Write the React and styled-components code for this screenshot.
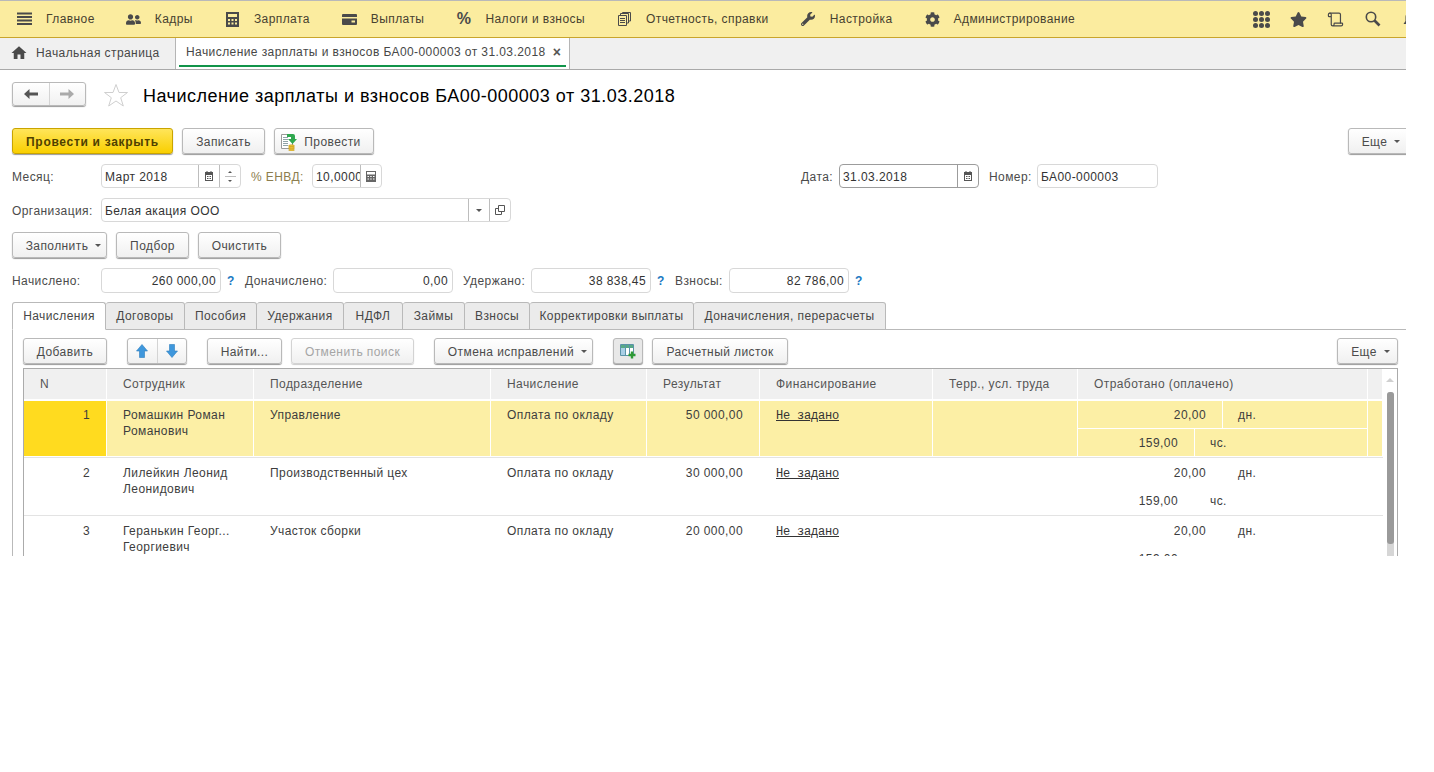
import React from 'react';
import styled, { createGlobalStyle } from 'styled-components';
import { FaWrench, FaCog, FaStar, FaUserFriends } from 'react-icons/fa';
import { MdHome } from 'react-icons/md';
import { Scroll } from 'lucide-react';

const Global = createGlobalStyle`
  html, body { margin: 0; padding: 0; background: #fff; }
  body { font-family: "Liberation Sans", Arial, sans-serif; font-size: 12px; color: #4b4b4b; letter-spacing: .42px; }
  * { box-sizing: border-box; }
`;

const Page = styled.div`
  width: 1406px; height: 556px; overflow: hidden; background: #fff;
  display: flex; flex-direction: column;
`;
const NavBar = styled.div`
  height: 38px; flex: none; display: flex; align-items: center;
  background: #fbec9f; border-top: 1px solid #b9b9b9; border-bottom: 1px solid #c9a52c; padding-left: 2px;
`;
const NavItem = styled.div`
  display: flex; align-items: center; height: 100%; padding: 0 17px 0 15px; color: #474130; white-space: nowrap;
  &:first-child { padding-right: 16px; }
`;
const NavIcon = styled.span`
  width: 15px; margin-right: 14px; height: 16px; display: flex; align-items: center; justify-content: center; color: #4a4a4a; flex: none;
`;
const Percent = styled.span`
  font-size: 16px; font-weight: bold; color: #4a4a4a; letter-spacing: 0;
`;
const NavTools = styled.div`
  margin-left: auto; display: flex; align-items: center; gap: 19px; margin-right: -12.500px; color: #4a4a4a;
`;
const ToolIcon = styled.span`
  width: 18px; height: 18px; display: flex; align-items: center; justify-content: center;
`;
const TabBar = styled.div`
  height: 32px; flex: none; display: flex; background: #f0f0f0; border-bottom: 1px solid #a9a9a9;
`;
const HomeTab = styled.div`
  width: 176px; display: flex; align-items: center; gap: 8px; padding: 0 0 1px 10px; border-right: 1px solid #b5b5b5; color: #474747;
`;
const OpenTab = styled.div`
  width: 394px; background: #fff; border-right: 1px solid #b5b5b5; padding: 0 3px; position: relative;
`;
const OpenTabInner = styled.div`
  height: 29px; display: flex; align-items: center; justify-content: space-between; padding: 0 5px 0 7px;
  border-bottom: 2px solid #11944a; color: #474747;
`;
const CloseMark = styled.span`
  font-size: 14px; font-weight: bold; color: #555; letter-spacing: 0;
`;
const TitleRow = styled.div`
  display: flex; align-items: center; height: 24px; margin: 12px 0 0 12px; flex: none;
`;
const NavGroup = styled.div`
  width: 74px; height: 24px; display: flex; border: 1px solid #b9b9b9; border-radius: 3px;
  background: linear-gradient(#fff, #f1f1f1); box-shadow: 0 1px 1px #999;
`;
const NavArrow = styled.span`
  flex: 1; display: flex; align-items: center; justify-content: center; & + & { border-left: 1px solid #d4d4d4; }
`;
const StarWrap = styled.span`
  margin: 2px 15px 0 18px; display: flex;
`;
const Title = styled.h1`
  margin: 0; padding-top: 4px; font-size: 18px; font-weight: normal; color: #000; letter-spacing: .5px; white-space: nowrap; line-height: 24px;
`;
const Row = styled.div`
  display: flex; align-items: center; flex: none; height: ${p => p.$h}px; margin: ${p => p.$mt}px 0 0 12px;
`;
const Btn = styled.div`
  width: ${p => p.$w}px; height: 26px; flex: none; display: flex; align-items: center; justify-content: center; gap: ${p => p.$gap ?? 0}px;
  border: 1px solid ${p => p.$primary ? '#c9a400' : p.$off ? '#d3d3d3' : '#b9b9b9'}; border-radius: 3px; white-space: nowrap;
  margin-left: ${p => p.$ml ?? 0}px; padding: 1px ${p => p.$pr ?? 0}px 0 ${p => p.$pl ?? 0}px;
  letter-spacing: ${p => p.$primary ? '.7px' : '.42px'};
  background: ${p => p.$primary ? 'linear-gradient(#ffe55a, #f9cf00)' : p.$pressed ? '#e8e8e8' : 'linear-gradient(#fff, #f0f0f0)'};
  box-shadow: ${p => p.$off ? '0 1px 1px #ccc' : '0 1px 1px #999'};
  color: ${p => p.$primary ? '#4f4100' : p.$off ? '#a5a5a5' : '#4b4b4b'}; font-weight: ${p => p.$primary ? 'bold' : 'normal'};
`;
const Caret = styled.span`
  width: 0; height: 0; border: 3px solid transparent; border-top: 3px solid #555; border-bottom: 0; margin-left: 7px; flex: none;
`;
const SelectCaret = styled(Caret)`
  margin-left: 0;
`;
const Label = styled.span`
  width: ${p => p.$w}px; margin-left: ${p => p.$ml ?? 0}px; padding-top: 1px; flex: none; white-space: nowrap; color: ${p => p.$muted ? '#8c7d4e' : '#4b4b4b'};
`;
const Field = styled.div`
  width: ${p => p.$w}px; height: ${p => p.$h ?? 24}px; flex: none; display: flex; align-items: stretch; background: #fff;
  border: 1px solid ${p => p.$focus ? '#9c9c9c' : '#d8d8d8'}; border-radius: 4px;
`;
const FieldText = styled.span`
  flex: 1; min-width: 0; overflow: hidden; white-space: nowrap; line-height: 24px; padding: 0 ${p => p.$right ? 4 : 0}px 0 3px; color: #333;
  text-align: ${p => p.$right ? 'right' : 'left'};
`;
const FieldBtn = styled.span`
  width: ${p => p.$w ?? 21}px; flex: none; display: flex; align-items: center; justify-content: center; border-left: 1px solid ${p => p.$dark ? '#9c9c9c' : '#bdbdbd'}; color: #555;
`;
const SpinBtn = styled(FieldBtn)`
  flex-direction: column; gap: 3px;
`;
const SpinUp = styled.i`
  width: 0; height: 0; border: 2px solid transparent; border-bottom: 2px solid #555; border-top: 0;
`;
const SpinDown = styled.i`
  width: 0; height: 0; border: 2px solid transparent; border-top: 2px solid #555; border-bottom: 0;
`;
const SpinLine = styled.i`
  width: 11px; height: 1px; background: #bdbdbd;
`;
const Help = styled.span`
  width: 24px; padding-left: 6px; color: #1a78c2; font-weight: bold; flex: none; font-size: 12px;
`;
const TabsRow = styled.div`
  display: flex; height: 28px; margin: 9px 0 0 12px; flex: none; position: relative; z-index: 1;
`;
const SheetTab = styled.div`
  width: ${p => p.$w}px; flex: none; display: flex; align-items: center; justify-content: center; white-space: nowrap;
  border: 1px solid #b9b9b9; border-left: ${p => p.$first ? '1px solid #b9b9b9' : 0}; border-radius: 3px 3px 0 0; color: #474747;
  background: ${p => p.$active ? '#fff' : '#ebebeb'}; border-bottom: ${p => p.$active ? '1px solid #fff' : '1px solid #b9b9b9'};
`;
const Panel = styled.div`
  margin: -1px 0 0 12px; padding: 8px 0 0 10px; border-left: 1px solid #b9b9b9; border-top: 1px solid #b9b9b9; flex: 1; min-height: 0; width: 1400px;
`;
const PanelTools = styled.div`
  display: flex; align-items: center; width: 1375px;
`;
const ArrowGroup = styled.div`
  width: 60px; height: 26px; margin-left: 20px; display: flex; border: 1px solid #b9b9b9; border-radius: 3px;
  background: linear-gradient(#fff, #f0f0f0); box-shadow: 0 1px 1px #999;
`;
const Table = styled.div`
  width: 1375px; margin-top: 4px; border: 1px solid #ababab; border-bottom: 0; height: 300px; display: flex;
`;
const TableBody = styled.div`
  width: 1359px; flex: none;
`;
const cols = '83px 147px 237px 156px 113px 173px 145px 290px 15px';
const HeadRow = styled.div`
  display: grid; grid-template-columns: ${cols}; height: 31px; padding-bottom: 1px;
`;
const HeadCell = styled.div`
  background: #f0f0f0; border-right: 1px solid #fff; min-width: 0; padding-left: ${p => p.$bare ? 0 : 16}px; display: flex; align-items: center; color: #555; white-space: nowrap;
`;
const DataRow = styled.div`
  display: grid; grid-template-columns: ${cols}; height: 58px; padding: 1px 0 1px; border-bottom: 1px solid #e3e3e3;
`;
const Cell = styled.div`
  background: ${p => p.$sel ? (p.$num ? '#ffdb1f' : '#fcefa5') : 'transparent'}; border-right: 1px solid #fff; min-width: 0;
  padding: ${p => p.$bare ? '0' : p.$num ? '6px 16px 0 0' : '6px 16px 0 16px'};
  line-height: 16px; color: #3d3d3d; text-align: ${p => p.$right || p.$num ? 'right' : 'left'}; overflow: hidden;
`;
const WorkCell = styled.div`
  border-right: 1px solid #fff; display: flex; flex-direction: column; gap: 1px;
`;
const WorkLine = styled.div`
  flex: 1; display: grid; grid-template-columns: ${p => p.$split}px 1fr; background: ${p => p.$sel ? '#fcefa5' : 'transparent'};
`;
const WorkValue = styled.div`
  text-align: right; padding: 6px 16px 0 0; border-right: 1px solid #fff; color: #3d3d3d; line-height: 16px;
`;
const WorkUnit = styled.div`
  padding: 6px 0 0 15px; color: #3d3d3d; line-height: 16px;
`;
const MonoLink = styled.span`
  font-family: "Liberation Mono", "Courier New", monospace; font-size: 12px; text-decoration: underline; letter-spacing: -.2px; color: #333; white-space: pre;
`;
const Scrollbar = styled.div`
  width: 14px; flex: none; position: relative; display: flex; flex-direction: column; align-items: center; padding-top: 23px;
`;
const ScrollUp = styled.i`
  position: absolute; top: 9px; left: 3px; width: 0; height: 0; border: 4px solid transparent; border-bottom: 4px solid #d0d0d0; border-top: 0;
`;
const Track = styled.div`
  width: 7px; height: 200px; background: #d6d6d6; border-radius: 3px 3px 0 0;
`;
const Thumb = styled.div`
  width: 7px; height: 152px; background: #9a9a9a; border-radius: 3px;
`;

const rows = [
  { n: 1, who: ['Ромашкин Роман', 'Романович'], dep: 'Управление', sum: '50 000,00', sel: true },
  { n: 2, who: ['Лилейкин Леонид', 'Леонидович'], dep: 'Производственный цех', sum: '30 000,00' },
  { n: 3, who: ['Геранькин Георг...', 'Георгиевич'], dep: 'Участок сборки', sum: '20 000,00' },
];
const heads = ['N', 'Сотрудник', 'Подразделение', 'Начисление', 'Результат', 'Финансирование', 'Терр., усл. труда', 'Отработано (оплачено)'];

const Svg = ({ w = 16, h = 16, vb, children }) => <svg width={w} height={h} viewBox={vb || `0 0 ${w} ${h}`}>{children}</svg>;

const Burger = () => <Svg w={15} h={14}><path d="M0 1.500h15M0 5h15M0 8.500h15M0 12h15" stroke="#4a4a4a" strokeWidth="2" /></Svg>;
const Calc = () => <Svg w={13} h={15}><path fillRule="evenodd" fill="#4a4a4a" d="M0 0h13v15H0zM2 2v3h9V2zM2 7v2h2V7zM5.500 7v2h2V7zM9 7v2h2V7zM2 10.500v2h2v-2zM5.500 10.500v2h2v-2zM9 10.500v2h2v-2z" /></Svg>;
const Card = () => <Svg w={15} h={11}><path fill="#4a4a4a" d="M1 0h13a1 1 0 0 1 1 1v2H0V1a1 1 0 0 1 1-1zM0 4.500h15V10a1 1 0 0 1-1 1H1a1 1 0 0 1-1-1zM9.500 6.500v2H13v-2z" /></Svg>;
const Docs = () => <Svg w={13} h={14}><g fill="none" stroke="#4a4a4a"><path d="M.5 3.500h8v10h-8z" /><path d="M2.500 3V1.500h8V11H9M4.500 1V.5h8V9H11" /><path d="M2 6.500h5M2 8.500h5M2 10.500h5" /></g></Svg>;
const Dots = () => <Svg w={17} h={17}><g fill="#4a4a4a">{[2.5, 8.5, 14.5].flatMap(y => [2.5, 8.5, 14.5].map(x => <circle key={`${x}-${y}`} cx={x} cy={y} r="2.5" />))}</g></Svg>;
const Search = () => <Svg w={16} h={16}><circle cx="6" cy="6" r="4.700" fill="none" stroke="#4a4a4a" strokeWidth="1.600" /><path d="M9.500 9.500l5 5" stroke="#4a4a4a" strokeWidth="2.600" /></Svg>;
const Bell = () => <Svg w={15} h={15}><path fill="#4a4a4a" d="M7.500 1a4 4 0 0 1 4 4v4l2 3H1.500l2-3V5a4 4 0 0 1 4-4zM6 13h3l-1.500 2z" /></Svg>;
const ArrowL = ({ c, flip }) => <Svg w={14} h={10}><path fill={c} transform={flip ? 'matrix(-1 0 0 1 14 0)' : undefined} d="M0 5l5.500-5v3.500H14v3H5.500V10z" /></Svg>;
const EmptyStar = () => <Svg w={24} h={24}><path fill="#fff" stroke="#cfcfcf" d="M12 1.500l3 8h8.500l-6.800 5.200 2.600 8.300L12 18l-7.300 5 2.600-8.300L.5 9.500H9z" /></Svg>;
const PostIcon = () => (
  <Svg w={17} h={18}>
    <path d="M.5 1.500h9l2 2v12H.5z" fill="#fff" stroke="#9a9a9a" />
    <path d="M2 4.500h5M2 6.500h5M2 8.500h5M2 10.500h5M2 12.500h5" stroke="#8fa3a8" />
    <path d="M6 1h6a2 2 0 0 1 2 2v3h2l-4.500 5L7 6h3V4H6z" fill="#2fa84f" />
    <ellipse cx="10.500" cy="13" rx="3" ry="1.300" fill="#f0c53a" stroke="#b58d10" strokeWidth=".5" />
    <ellipse cx="10.500" cy="15" rx="3" ry="1.300" fill="#f0c53a" stroke="#b58d10" strokeWidth=".5" />
    <ellipse cx="10.500" cy="17" rx="3" ry="1" fill="#f0c53a" stroke="#b58d10" strokeWidth=".5" />
  </Svg>
);
const BlueArrow = ({ down }) => <Svg w={12} h={14}><path fill="#3f97dc" stroke="#2b7dbd" strokeWidth=".6" transform={down ? 'matrix(1 0 0 -1 0 14)' : undefined} d="M6 .5L11.500 7H8.500v6.500h-5V7H.5z" /></Svg>;
const AddCols = () => (
  <Svg w={17} h={15}>
    <path fill="#fff" stroke="#5b93a8" d="M.5 .5h13v11H.5z" />
    <path fill="#58a986" d="M1 1h12v3H1z" />
    <path fill="#a9cfe6" d="M1 4h4v7H1z" />
    <path d="M5.500 1v10.500M9.500 1v10.500" stroke="#5b93a8" />
    <path d="M12 7.500v7M8.500 11h7" stroke="#2f9a36" strokeWidth="2.400" />
  </Svg>
);
const CalIcon = () => <Svg w={10} h={10}><path fillRule="evenodd" fill="#555" d="M1 1h1.500V0h1v1h3V0h1v1H9v9H1zM2 4v5h6V4zM3 5h1v1H3zM4.500 5h1v1h-1zM6 5h1v1H6zM3 7h1v1H3zM4.500 7h1v1h-1zM6 7h1v1H6z" /></Svg>;
const CalcSmall = () => <Svg w={10} h={11}><path fillRule="evenodd" fill="#666" d="M0 0h10v11H0zM1 1v2.500h8V1zM1.500 5v1h1.500V5zM4.200 5v1h1.500V5zM7 5v1h1.500V5zM1.500 7.500v1h1.500v-1zM4.200 7.500v1h1.500v-1zM7 7.500v1h1.500v-1z" /></Svg>;
const OpenIcon = () => <Svg w={10} h={10}><path fill="none" stroke="#555" d="M3.500.5h6v6h-6zM3.500 3.500H.5v6h6V6.500" /></Svg>;

const Sum = ({ label, lw, ml, value, help }) => (
  <>
    <Label $w={lw} $ml={ml}>{label}</Label>
    <Field $w={120} $h={25}><FieldText $right>{value}</FieldText></Field>
    {help && <Help>?</Help>}
  </>
);

export default function App() {
  return (
    <Page>
      <Global />
      <NavBar>
        <NavItem><NavIcon><Burger /></NavIcon>Главное</NavItem>
        <NavItem><NavIcon><FaUserFriends size={17} /></NavIcon>Кадры</NavItem>
        <NavItem><NavIcon><Calc /></NavIcon>Зарплата</NavItem>
        <NavItem><NavIcon><Card /></NavIcon>Выплаты</NavItem>
        <NavItem><NavIcon><Percent>%</Percent></NavIcon>Налоги и взносы</NavItem>
        <NavItem><NavIcon><Docs /></NavIcon>Отчетность, справки</NavItem>
        <NavItem><NavIcon><FaWrench size={14} /></NavIcon>Настройка</NavItem>
        <NavItem><NavIcon><FaCog size={15} /></NavIcon>Администрирование</NavItem>
        <NavTools>
          <ToolIcon><Dots /></ToolIcon>
          <ToolIcon><FaStar size={17} /></ToolIcon>
          <ToolIcon><Scroll size={17} strokeWidth={1.7} /></ToolIcon>
          <ToolIcon><Search /></ToolIcon>
          <ToolIcon><Bell /></ToolIcon>
        </NavTools>
      </NavBar>
      <TabBar>
        <HomeTab><MdHome size={18} color="#4a4a4a" />Начальная страница</HomeTab>
        <OpenTab>
          <OpenTabInner>Начисление зарплаты и взносов БА00-000003 от 31.03.2018<CloseMark>×</CloseMark></OpenTabInner>
        </OpenTab>
      </TabBar>
      <TitleRow>
        <NavGroup>
          <NavArrow><ArrowL c="#555" /></NavArrow>
          <NavArrow><ArrowL c="#aaa" flip /></NavArrow>
        </NavGroup>
        <StarWrap><EmptyStar /></StarWrap>
        <Title>Начисление зарплаты и взносов БА00-000003 от 31.03.2018</Title>
      </TitleRow>
      <Row $h={26} $mt={22}>
        <Btn $w={161} $primary>Провести и закрыть</Btn>
        <Btn $w={83} $ml={9}>Записать</Btn>
        <Btn $w={100} $ml={9} $gap={6} $pr={6}><PostIcon />Провести</Btn>
        <Btn $w={62} $ml={974} $pl={4}>Еще<Caret /></Btn>
      </Row>
      <Row $h={24} $mt={10}>
        <Label $w={89}>Месяц:</Label>
        <Field $w={140}>
          <FieldText>Март 2018</FieldText>
          <FieldBtn><CalIcon /></FieldBtn>
          <SpinBtn><SpinUp /><SpinLine /><SpinDown /></SpinBtn>
        </Field>
        <Label $w={61} $ml={10} $muted>% ЕНВД:</Label>
        <Field $w={70}>
          <FieldText>10,0000</FieldText>
          <FieldBtn><CalcSmall /></FieldBtn>
        </Field>
        <Label $w={38} $ml={419}>Дата:</Label>
        <Field $w={140} $focus>
          <FieldText>31.03.2018</FieldText>
          <FieldBtn $dark><CalIcon /></FieldBtn>
        </Field>
        <Label $w={48} $ml={10}>Номер:</Label>
        <Field $w={121}><FieldText>БА00-000003</FieldText></Field>
      </Row>
      <Row $h={24} $mt={10}>
        <Label $w={89}>Организация:</Label>
        <Field $w={410}>
          <FieldText>Белая акация ООО</FieldText>
          <FieldBtn><SelectCaret /></FieldBtn>
          <FieldBtn><OpenIcon /></FieldBtn>
        </Field>
      </Row>
      <Row $h={26} $mt={10}>
        <Btn $w={95} $pl={8}>Заполнить<Caret /></Btn>
        <Btn $w={73} $ml={9}>Подбор</Btn>
        <Btn $w={83} $ml={9}>Очистить</Btn>
      </Row>
      <Row $h={25} $mt={10}>
        <Sum label="Начислено:" lw={89} value="260 000,00" help />
        <Sum label="Доначислено:" lw={88} value="0,00" />
        <Sum label="Удержано:" lw={68} ml={10} value="38 838,45" help />
        <Sum label="Взносы:" lw={54} value="82 786,00" help />
      </Row>
      <TabsRow>
        <SheetTab $w={94} $first $active>Начисления</SheetTab>
        <SheetTab $w={79}>Договоры</SheetTab>
        <SheetTab $w={72}>Пособия</SheetTab>
        <SheetTab $w={87}>Удержания</SheetTab>
        <SheetTab $w={59}>НДФЛ</SheetTab>
        <SheetTab $w={62}>Займы</SheetTab>
        <SheetTab $w={65}>Взносы</SheetTab>
        <SheetTab $w={164}>Корректировки выплаты</SheetTab>
        <SheetTab $w={192}>Доначисления, перерасчеты</SheetTab>
      </TabsRow>
      <Panel>
        <PanelTools>
          <Btn $w={84}>Добавить</Btn>
          <ArrowGroup>
            <NavArrow><BlueArrow /></NavArrow>
            <NavArrow><BlueArrow down /></NavArrow>
          </ArrowGroup>
          <Btn $w={75} $ml={20}>Найти...</Btn>
          <Btn $w={123} $ml={9} $off>Отменить поиск</Btn>
          <Btn $w={159} $ml={20} $pl={8}>Отмена исправлений<Caret /></Btn>
          <Btn $w={30} $ml={20} $pressed><AddCols /></Btn>
          <Btn $w={136} $ml={9}>Расчетный листок</Btn>
          <Btn $w={61} $ml={549} $pl={6}>Еще<Caret /></Btn>
        </PanelTools>
        <Table>
          <TableBody>
            <HeadRow>
              {heads.map(h => <HeadCell key={h}>{h}</HeadCell>)}
              <HeadCell $bare />
            </HeadRow>
            {rows.map(r => (
              <DataRow key={r.n}>
                <Cell $sel={r.sel} $num>{r.n}</Cell>
                <Cell $sel={r.sel}>{r.who[0]}<br />{r.who[1]}</Cell>
                <Cell $sel={r.sel}>{r.dep}</Cell>
                <Cell $sel={r.sel}>Оплата по окладу</Cell>
                <Cell $sel={r.sel} $right>{r.sum}</Cell>
                <Cell $sel={r.sel}><MonoLink>Не задано</MonoLink></Cell>
                <Cell $sel={r.sel} $bare />
                <WorkCell>
                  <WorkLine $sel={r.sel} $split={145}>
                    <WorkValue>20,00</WorkValue><WorkUnit>дн.</WorkUnit>
                  </WorkLine>
                  <WorkLine $sel={r.sel} $split={117}>
                    <WorkValue>159,00</WorkValue><WorkUnit>чс.</WorkUnit>
                  </WorkLine>
                </WorkCell>
                <Cell $sel={r.sel} $bare />
              </DataRow>
            ))}
          </TableBody>
          <Scrollbar>
            <ScrollUp />
            <Track><Thumb /></Track>
          </Scrollbar>
        </Table>
      </Panel>
    </Page>
  );
}
